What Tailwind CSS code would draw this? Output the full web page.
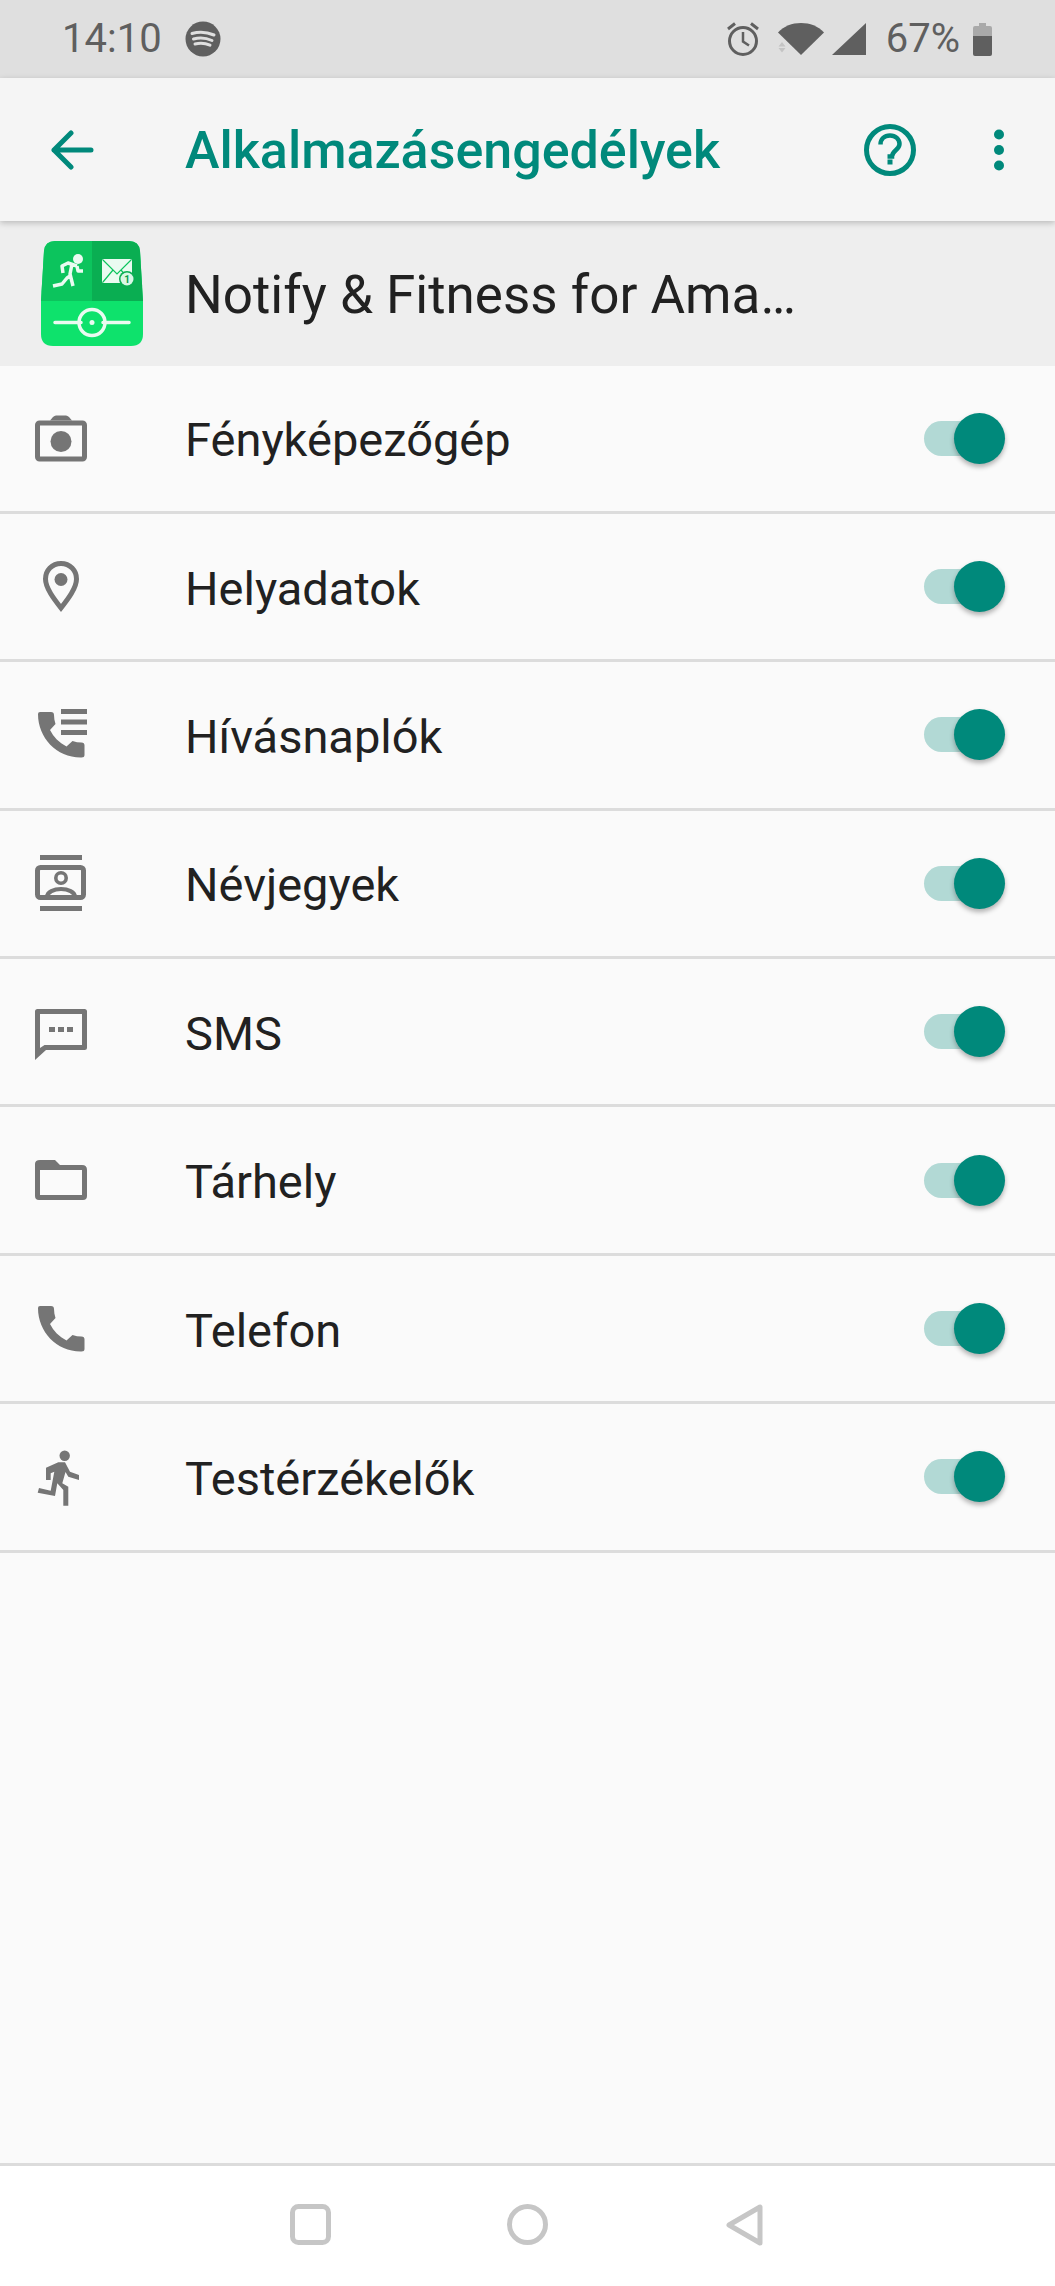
<!DOCTYPE html>
<html lang="en">
<head>
    <meta charset="UTF-8">
    <title>Alkalmazásengedélyek</title>
    <script src="https://cdn.jsdelivr.net/npm/@tailwindcss/browser@4"></script>
</head>
<body class="bg-[#fafafa] font-['Roboto',sans-serif]">
<div class="w-[1055px] h-[2286px] flex flex-col overflow-hidden">

    <!-- status bar -->
    <div class="h-[78px] bg-[#dfdfdf] flex items-center pl-[62px] pr-[63px] text-[#5f5f5f] shrink-0">
        <span class="text-[40px] leading-none">14:10</span>
        <svg class="ml-[23px]" width="36" height="36" viewBox="0 0 36 36">
            <circle cx="18" cy="18" r="17.500" fill="#5f5f5f"/>
            <path d="M7 12.500c7-2 15-1.500 22 1.500M8.500 18c6-1.600 13-1 18.500 1.500M10 23c5-1.200 10.500-.8 15 1.200" stroke="#dfdfdf" stroke-width="3" stroke-linecap="round" fill="none"/>
        </svg>
        <div class="ml-auto flex items-center">
            <svg width="34" height="36" viewBox="0 0 34 36" fill="none" stroke="#5f5f5f">
                <circle cx="17" cy="20" r="13.500" stroke-width="3"/>
                <path d="M17 11v9.500l6 4" stroke-width="2.500"/>
                <path d="M2 8l7-5.500M32 8l-7-5.500" stroke-width="3"/>
            </svg>
            <svg class="ml-[18px]" width="46" height="34" viewBox="0 0 46 34">
                <path d="M0 10.500C6 4 14 1 23 1s17 3 23 9.500L23 33z" fill="#5f5f5f"/>
                <path d="M4 20l3.500 4.500h-7zM.5 26h7L4 30.500z" fill="#c4c4c4"/>
            </svg>
            <svg class="ml-[8px]" width="34" height="34" viewBox="0 0 34 34">
                <path d="M34 1v32H0z" fill="#5f5f5f"/>
            </svg>
            <span class="ml-[20px] text-[40px] leading-none">67%</span>
            <svg class="ml-[13px]" width="19" height="34" viewBox="0 0 19 34">
                <path d="M6 1h7v3h4q2 0 2 2v8H0V6q0-2 2-2h4z" fill="#a9a9a9"/>
                <path d="M0 14h19v18q0 2-2 2H2q-2 0-2-2z" fill="#5f5f5f"/>
            </svg>
        </div>
    </div>

    <!-- app bar -->
    <div class="relative z-10 h-[143px] bg-[#f5f5f5] flex items-center shadow-[0_2px_6px_rgba(0,0,0,0.22)] shrink-0">
        <svg class="ml-[50px]" width="44" height="40" viewBox="0 0 44 40" fill="none" stroke="#00897b" stroke-width="5" stroke-linecap="round" stroke-linejoin="round">
            <path d="M41 20H4M21 3L4 20l17 17"/>
        </svg>
        <h1 class="ml-[91px] pt-[2px] text-[#00897b] text-[52px] font-medium leading-none">Alkalmazásengedélyek</h1>
        <svg class="ml-auto" width="52" height="52" viewBox="0 0 52 52">
            <circle cx="26" cy="26" r="23.500" fill="none" stroke="#00897b" stroke-width="5"/>
            <path d="M16.500 20.500c0-5.500 4-9 9.500-9s9.500 3.500 9.500 8.500c0 6-7.500 6.500-7.500 12.500h-4.500" fill="none" stroke="#00897b" stroke-width="4.500"/>
            <rect x="23.500" y="35.500" width="5" height="5" fill="#00897b"/>
        </svg>
        <svg class="ml-[77px] mr-[50px]" width="12" height="42" viewBox="0 0 12 42" fill="#00897b">
            <circle cx="6" cy="5.500" r="5"/>
            <circle cx="6" cy="21" r="5"/>
            <circle cx="6" cy="36.500" r="5"/>
        </svg>
    </div>

    <!-- app header -->
    <div class="h-[144.500px] bg-[#eeeeee] flex items-center pl-[41px] shrink-0">
        <svg width="102" height="105" viewBox="0 0 102 105">
            <path d="M14 0h74q10 0 11 10l3 50v33q0 12-12 12H12q-12 0-12-12V60l3-50Q4 0 14 0z" fill="#0ee26c"/>
            <path d="M0 60l3-50Q4 0 14 0h37v60z" fill="#0cc45d"/>
            <path d="M51 0h37q10 0 11 10l3 50H51z" fill="#0aae52"/>
            <circle cx="37" cy="18" r="5" fill="#eafbf1"/>
            <path d="M36 25l-9-3-6 3 1 7M31 23l-2 10 3 12M29 35l-3 2-5 6-9 2M36 25l1 5h5" fill="none" stroke="#eafbf1" stroke-width="3.500" stroke-linejoin="round"/>
            <rect x="61" y="18" width="30" height="24" rx="2" fill="#eafbf1"/>
            <path d="M62 19l14 14 14-14M62 41l10-12M90 41L80 29" fill="none" stroke="#0cc45d" stroke-width="1.200"/>
            <circle cx="86" cy="38" r="8" fill="#0aae52"/>
            <circle cx="86" cy="38" r="6.500" fill="#d9f7e6"/>
            <text x="86" y="42" text-anchor="middle" font-size="10" font-weight="700" fill="#0a9e4b" font-family="Roboto, sans-serif">1</text>
            <path d="M14 81.500h26M62 81.500h26" stroke="#eafbf1" stroke-width="3.500" stroke-linecap="round"/>
            <circle cx="51" cy="81.500" r="13" fill="none" stroke="#eafbf1" stroke-width="3.500"/>
            <circle cx="51" cy="81.500" r="2.500" fill="#eafbf1"/>
        </svg>
        <span class="ml-[42px] pt-[4px] text-[#212121] text-[53px] leading-none">Notify &amp; Fitness for Ama…</span>
    </div>

    <!-- permission rows -->
    <div class="h-[148.400px] flex items-center pl-[26px] pr-[55px] border-b-[3px] border-[#dcdcdc] shrink-0">
        <svg width="70" height="70" viewBox="0 0 70 70" fill="#757575">
            <path d="M24 17.500l3-3.500q1.500-1.500 3-1.500h10q1.500 0 3 1.500l3 3.500z"/>
            <rect x="11.500" y="20" width="47" height="36" rx="2" fill="none" stroke="#757575" stroke-width="5"/>
            <circle cx="35" cy="38.500" r="10.500"/>
        </svg>
        <span class="ml-[89px] pt-[3px] text-[#212121] text-[47px] leading-none">Fényképezőgép</span>
        <div class="ml-auto relative w-[76px] h-[35px] rounded-full bg-[#b2d9d5]"><div class="absolute right-[-5px] top-[-8px] w-[51px] h-[51px] rounded-full bg-[#00897b] shadow-[0_3px_5px_rgba(0,0,0,0.3)]"></div></div>
    </div>
    <div class="h-[148.400px] flex items-center pl-[26px] pr-[55px] border-b-[3px] border-[#dcdcdc] shrink-0">
        <svg width="70" height="70" viewBox="0 0 70 70" fill="#757575">
            <path d="M35 11.500C26 11.500 19.500 18.500 19.500 27C19.500 36 28 47 35 56C42 47 50.500 36 50.500 27C50.500 18.500 44 11.500 35 11.500Z" fill="none" stroke="#757575" stroke-width="5"/>
            <circle cx="35" cy="27.500" r="6.500"/>
        </svg>
        <span class="ml-[89px] pt-[3px] text-[#212121] text-[47px] leading-none">Helyadatok</span>
        <div class="ml-auto relative w-[76px] h-[35px] rounded-full bg-[#b2d9d5]"><div class="absolute right-[-5px] top-[-8px] w-[51px] h-[51px] rounded-full bg-[#00897b] shadow-[0_3px_5px_rgba(0,0,0,0.3)]"></div></div>
    </div>
    <div class="h-[148.400px] flex items-center pl-[26px] pr-[55px] border-b-[3px] border-[#dcdcdc] shrink-0">
        <svg width="70" height="70" viewBox="0 0 70 70" fill="#757575">
            <path d="M14 12h11q3 0 3 3c0 3 .5 6 1.500 9l-5.500 6c3.500 7 9 12.500 16.500 16.500l6-5.500c3 1 6 1.500 9 1.500q3 0 3 3v9.500q0 2.500-3 2.500C31 58 12 38 12 14q0-2 2-2z"/>
            <path d="M35 9h26v5H35zM35 19.500h26v5H35zM35 30h26v5H35z"/>
        </svg>
        <span class="ml-[89px] pt-[3px] text-[#212121] text-[47px] leading-none">Hívásnaplók</span>
        <div class="ml-auto relative w-[76px] h-[35px] rounded-full bg-[#b2d9d5]"><div class="absolute right-[-5px] top-[-8px] w-[51px] h-[51px] rounded-full bg-[#00897b] shadow-[0_3px_5px_rgba(0,0,0,0.3)]"></div></div>
    </div>
    <div class="h-[148.400px] flex items-center pl-[26px] pr-[55px] border-b-[3px] border-[#dcdcdc] shrink-0">
        <svg width="70" height="70" viewBox="0 0 70 70" fill="#757575">
            <path d="M14 7h42v5H14zM14 58h42v5H14z"/>
            <rect x="11.500" y="19.500" width="46" height="30" rx="3" fill="none" stroke="#757575" stroke-width="5"/>
            <circle cx="35" cy="30" r="5.200" fill="none" stroke="#757575" stroke-width="3.600"/>
            <path d="M21 49c0-5 7-8 14-8s14 3 14 8" fill="none" stroke="#757575" stroke-width="4"/>
        </svg>
        <span class="ml-[89px] pt-[3px] text-[#212121] text-[47px] leading-none">Névjegyek</span>
        <div class="ml-auto relative w-[76px] h-[35px] rounded-full bg-[#b2d9d5]"><div class="absolute right-[-5px] top-[-8px] w-[51px] h-[51px] rounded-full bg-[#00897b] shadow-[0_3px_5px_rgba(0,0,0,0.3)]"></div></div>
    </div>
    <div class="h-[148.400px] flex items-center pl-[26px] pr-[55px] border-b-[3px] border-[#dcdcdc] shrink-0">
        <svg width="70" height="70" viewBox="0 0 70 70" fill="#757575">
            <path d="M11.500 12h47q2.500 0 2.500 2.500v36q0 2.500-2.500 2.500H20L9 63V14.500Q9 12 11.500 12zM14 17v34l4.500-3H56V17z" fill-rule="evenodd"/>
            <path d="M23 30h6v5h-6zM32 30h6v5h-6zM41 30h6v5h-6z"/>
        </svg>
        <span class="ml-[89px] pt-[3px] text-[#212121] text-[47px] leading-none">SMS</span>
        <div class="ml-auto relative w-[76px] h-[35px] rounded-full bg-[#b2d9d5]"><div class="absolute right-[-5px] top-[-8px] w-[51px] h-[51px] rounded-full bg-[#00897b] shadow-[0_3px_5px_rgba(0,0,0,0.3)]"></div></div>
    </div>
    <div class="h-[148.400px] flex items-center pl-[26px] pr-[55px] border-b-[3px] border-[#dcdcdc] shrink-0">
        <svg width="70" height="70" viewBox="0 0 70 70" fill="#757575">
            <path d="M14 15h15l5 5h22q5 0 5 5v26q0 4-4 4H13q-4 0-4-4V19q0-4 5-4zM14 25v25h42V25z" fill-rule="evenodd"/>
        </svg>
        <span class="ml-[89px] pt-[3px] text-[#212121] text-[47px] leading-none">Tárhely</span>
        <div class="ml-auto relative w-[76px] h-[35px] rounded-full bg-[#b2d9d5]"><div class="absolute right-[-5px] top-[-8px] w-[51px] h-[51px] rounded-full bg-[#00897b] shadow-[0_3px_5px_rgba(0,0,0,0.3)]"></div></div>
    </div>
    <div class="h-[148.400px] flex items-center pl-[26px] pr-[55px] border-b-[3px] border-[#dcdcdc] shrink-0">
        <svg width="70" height="70" viewBox="0 0 70 70" fill="#757575">
            <path d="M14 12h11q3 0 3 3c0 3 .5 6 1.500 9l-5.500 6c3.500 7 9 12.500 16.500 16.500l6-5.500c3 1 6 1.500 9 1.500q3 0 3 3v9.500q0 2.500-3 2.500C31 58 12 38 12 14q0-2 2-2z"/>
        </svg>
        <span class="ml-[89px] pt-[3px] text-[#212121] text-[47px] leading-none">Telefon</span>
        <div class="ml-auto relative w-[76px] h-[35px] rounded-full bg-[#b2d9d5]"><div class="absolute right-[-5px] top-[-8px] w-[51px] h-[51px] rounded-full bg-[#00897b] shadow-[0_3px_5px_rgba(0,0,0,0.3)]"></div></div>
    </div>
    <div class="h-[148.400px] flex items-center pl-[26px] pr-[55px] border-b-[3px] border-[#dcdcdc] shrink-0">
        <svg width="70" height="70" viewBox="0 0 70 70" fill="#757575">
            <circle cx="38.700" cy="13.700" r="5.200"/>
            <path d="M20 25.700L32.300 20.300H39L44 29.700L53 33V38L42.300 34.700L39.500 30L36.300 41.300L42.300 44.700V63.700H37.300V48L31.300 41.300L29 54L11.700 50.700L13 46L24.700 48.700L28.300 29.700L24.700 31.300V38H20z"/>
        </svg>
        <span class="ml-[89px] pt-[3px] text-[#212121] text-[47px] leading-none">Testérzékelők</span>
        <div class="ml-auto relative w-[76px] h-[35px] rounded-full bg-[#b2d9d5]"><div class="absolute right-[-5px] top-[-8px] w-[51px] h-[51px] rounded-full bg-[#00897b] shadow-[0_3px_5px_rgba(0,0,0,0.3)]"></div></div>
    </div>

    <div class="flex-1"></div>

    <!-- nav bar -->
    <div class="h-[123px] bg-white border-t-[3px] border-[#dcdcdc] flex items-center pb-[3px] shrink-0">
        <svg class="ml-[290px]" width="41" height="41" viewBox="0 0 41 41"><rect x="2.500" y="2.500" width="36" height="36" rx="6" fill="none" stroke="#c6c6c6" stroke-width="5"/></svg>
        <svg class="ml-[176px]" width="41" height="41" viewBox="0 0 41 41"><circle cx="20.500" cy="20.500" r="18" fill="none" stroke="#c6c6c6" stroke-width="5"/></svg>
        <svg class="ml-[178px]" width="37" height="42" viewBox="0 0 37 42"><path d="M34 3v36L3 21z" fill="none" stroke="#c6c6c6" stroke-width="5" stroke-linejoin="round"/></svg>
    </div>
</div>
</body>
</html>
